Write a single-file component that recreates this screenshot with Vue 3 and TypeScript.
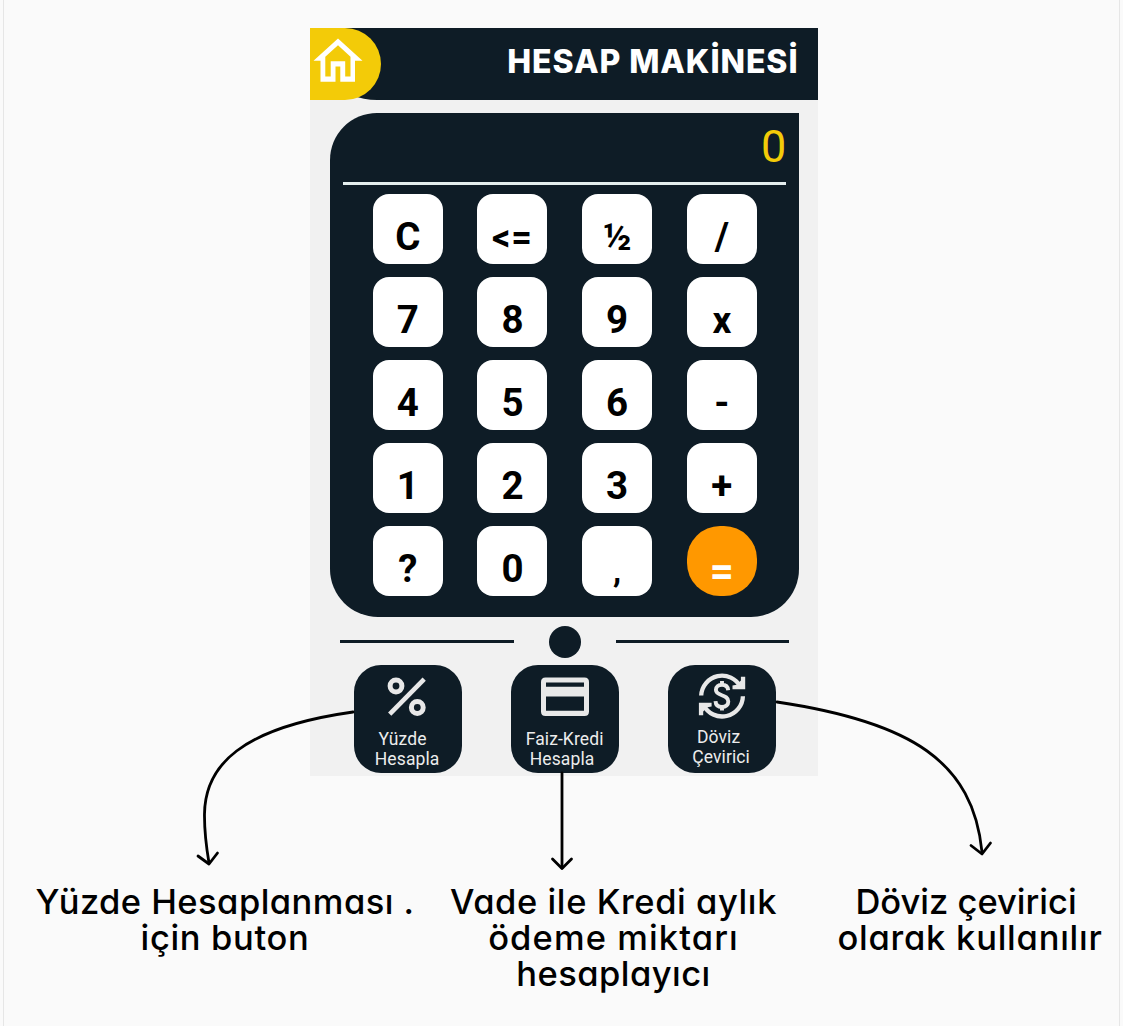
<script setup lang="ts">
interface Key {
  label: string
  kind?: string
}

const keys: Key[] = [
  { label: 'C' }, { label: '<=', kind: 'back' }, { label: '½', kind: 'half' }, { label: '/', kind: 'slash' },
  { label: '7' }, { label: '8' }, { label: '9' }, { label: 'x', kind: 'times' },
  { label: '4' }, { label: '5' }, { label: '6' }, { label: '-' },
  { label: '1' }, { label: '2' }, { label: '3' }, { label: '+' },
  { label: '?' }, { label: '0' }, { label: ',', kind: 'comma' }, { label: '=', kind: 'equals' },
]
</script>

<template>
  <main class="page">
    <section class="phone">
      <header class="header">
        <div class="home">
          <svg viewBox="0 0 50 46" width="50" height="46">
            <path fill="#fff" fill-rule="evenodd" d="M25 1.500 49.500 23.700H42V44.700H27.300V29.500H22.500V44.700H7.500V23.700H.500ZM25 8.200 12.300 19.700V39.500H17.700V24.300H32.200V39.500H37.500V19.700Z" />
          </svg>
        </div>
        <h1 class="title">HESAP MAKİNESİ</h1>
      </header>

      <div class="panel">
        <div class="display">0</div>
        <div class="keys">
          <button v-for="key in keys" :key="key.label" class="key" :class="key.kind">
            <span>{{ key.label }}</span>
          </button>
        </div>
      </div>

      <div class="divider">
        <i class="rule"></i><i class="dot"></i><i class="rule"></i>
      </div>

      <nav class="tools">
        <div class="tool percent">
          <svg class="icon" viewBox="0 0 48 48" width="48" height="48" fill="none" stroke="#e8e8e8">
            <circle cx="13" cy="13" r="5.900" stroke-width="5" />
            <circle cx="34.300" cy="34.500" r="5.900" stroke-width="5" />
            <path d="M6.700 41.200 41.200 6.200" stroke-width="4.600" />
          </svg>
          <span class="label"><b>Yüzde</b><b>Hesapla</b></span>
        </div>
        <div class="tool credit">
          <svg class="icon" viewBox="0 0 48 48" width="48" height="48">
            <path fill="#e8e8e8" fill-rule="evenodd" d="M4.500 4.500H43.500Q48 4.500 48 9V38.500Q48 43 43.500 43H4.500Q0 43 0 38.500V9Q0 4.500 4.500 4.500ZM5 9.500V13.700H43V9.500ZM5 23.500V37.700H43V23.500Z" />
          </svg>
          <span class="label"><b>Faiz-Kredi</b><b>Hesapla</b></span>
        </div>
        <div class="tool currency">
          <svg class="icon" viewBox="0 0 48 48" width="48" height="48" fill="none" stroke="#e8e8e8" stroke-width="4.300">
            <path d="M3.200 22.500A20.800 20.800 0 0 1 42.500 14" />
            <path d="M44.900 23.200A20.800 20.800 0 0 1 5.500 32" />
            <path d="M47.200 3.700V16.300H34.500V12.500L38.500 11.700 42.900 7.500V3.700Z" fill="#e8e8e8" stroke="none" />
            <path d="M.900 42.300V29.700H13.600V33.500L9.600 34.300 5.200 38.500V42.300Z" fill="#e8e8e8" stroke="none" />
            <path d="M30.200 17.200C29.800 13.500 27.500 11.800 24 11.800C20.200 11.800 17.900 13.800 17.900 16.800C17.900 23.700 30.300 20.800 30.300 28.600C30.300 32 27.800 34 24 34C20.200 34 17.700 32 17.500 28.200M24 8V12M24 33.500V37.500" stroke-width="3.900" />
          </svg>
          <span class="label"><b>Döviz</b><b>Çevirici</b></span>
        </div>
      </nav>
    </section>

    <section class="captions">
      <p class="first"><span class="l1">Yüzde Hesaplanması .</span><span class="l2">için buton</span></p>
      <p class="second"><span class="l3">Vade ile Kredi aylık</span><span class="l4">ödeme miktarı</span><span class="l5">hesaplayıcı</span></p>
      <p class="third"><span class="l6">Döviz çevirici</span><span class="l7">olarak kullanılır</span></p>
    </section>

    <svg class="arrows" viewBox="0 0 1123 1026" width="1123" height="1026">
      <path d="M353 712C240 728 205 766 204.500 814C204.300 832 206 845 209 863" />
      <path d="M198 856 209 864 217.500 853" />
      <path d="M562 773V868" />
      <path d="M552.500 859 562 868.500 571.500 859" />
      <path d="M777 702C912 722 973 762 982 852" />
      <path d="M971 845.500 982 854 990.500 843" />
    </svg>
  </main>
</template>

<style>
body {
  margin: 0;
  background: #fafafa;
}
</style>

<style scoped>
.page {
  position: relative;
  box-sizing: border-box;
  width: 1123px;
  height: 1026px;
  padding-top: 28px;
  overflow: hidden;
  background: linear-gradient(90deg, #fafafa 3px, #e6e6e6 3px, #e6e6e6 4px, #fafafa 4px, #fafafa 1119px, #e6e6e6 1119px, #e6e6e6 1120px, #fafafa 1120px);
}
.phone {
  box-sizing: border-box;
  width: 508px;
  height: 748px;
  margin-left: 310px;
  background: #f1f1f1;
}
.header {
  display: flex;
  justify-content: space-between;
  height: 72.400px;
  background: #0e1c26;
  border-bottom-left-radius: 67px;
}
.home {
  display: flex;
  width: 71px;
  height: 72.400px;
  background: #f3cb08;
  border-radius: 0 36px 36px 0;
}
.home svg {
  margin: 9px 0 0 2.500px;
}
.title {
  margin: 0 19.500px 0 0;
  color: #fff;
  font: 800 32px/67px Inter, sans-serif;
  letter-spacing: 0.930px;
  white-space: nowrap;
}
.panel {
  box-sizing: border-box;
  width: 469px;
  height: 503.500px;
  margin: 13.100px 0 0 20.400px;
  padding: 0 13px;
  background: #0e1c26;
  border-radius: 47px 0 48px 48px;
}
.display {
  box-sizing: border-box;
  height: 72px;
  border-bottom: 3px solid #e4eeee;
  color: #f3cb08;
  font: 400 45px/67px Roboto, sans-serif;
  text-align: right;
}
.keys {
  display: grid;
  grid-template-columns: repeat(4, 70px);
  grid-auto-rows: 70px;
  gap: 12.800px 34.700px;
  padding: 9px 0 0 29.400px;
}
.key {
  display: flex;
  align-items: center;
  justify-content: center;
  padding: 16px 0 0;
  border: 0;
  border-radius: 16px;
  background: #fff;
  color: #000;
  font: 700 38.500px/46px Roboto, sans-serif;
}
.back {
  padding-top: 18px;
  font-size: 36px;
  letter-spacing: 1px;
}
.half {
  font-size: 37.500px;
}
.times {
  padding-top: 18px;
  font-size: 37px;
}
.comma {
  padding-top: 20px;
  font-size: 33px;
}
.equals {
  padding-top: 22px;
  border-radius: 33px;
  background: #ff9800;
  color: #fff;
  font-size: 42px;
}
.divider {
  display: flex;
  align-items: center;
  justify-content: space-between;
  height: 32px;
  margin: 9.500px 29px 0 30px;
}
.rule {
  width: 173.500px;
  height: 2.500px;
  margin-bottom: 2px;
  background: #0e1c26;
}
.dot {
  width: 32px;
  height: 32px;
  border-radius: 50%;
  background: #0e1c26;
}
.tools {
  display: flex;
  gap: 49px;
  margin: 6.500px 0 0 43.600px;
}
.tool {
  display: flex;
  flex-direction: column;
  align-items: center;
  width: 108px;
  height: 108px;
  border-radius: 27px;
  background: #0e1c26;
}
.icon {
  margin-top: 8px;
}
.label {
  display: flex;
  flex-direction: column;
  align-items: center;
  margin-top: 8px;
  color: #ececec;
  font: 400 17.500px/20.500px Roboto, sans-serif;
}
.label b {
  font-weight: 400;
  letter-spacing: 0.100px;
}
.percent b:first-child {
  margin-right: 9px;
}
.percent .label {
  margin-right: 1px;
}
.percent .icon {
  margin-right: 0.500px;
}
.credit b:last-child {
  margin-right: 5px;
}
.currency b:first-child {
  margin-right: 5px;
}
.currency .label {
  margin-top: 6px;
  margin-right: 1px;
}
.captions {
  display: flex;
  margin-top: 108px;
  color: #000;
  font: 500 34.500px/36px Inter, sans-serif;
  font-feature-settings: 'cv11';
}
.captions p {
  display: flex;
  flex-direction: column;
  align-items: center;
  margin: 0;
  white-space: nowrap;
}
.captions .first {
  width: 450px;
}
.captions .second {
  width: 327px;
}
.captions .third {
  width: 264px;
  margin-left: 61px;
}
.l1 {
  letter-spacing: 0.450px;
}
.l2 {
  letter-spacing: 0.650px;
}
.l3 {
  letter-spacing: 0.580px;
}
.l4 {
  letter-spacing: 1.100px;
}
.l5 {
  letter-spacing: 0.450px;
}
.l6 {
  margin-right: 8px;
}
.l7 {
  letter-spacing: 0.760px;
}
.arrows {
  position: absolute;
  inset: 0;
  fill: none;
  stroke: #000;
  stroke-width: 2.800;
  stroke-linecap: round;
  stroke-linejoin: round;
}
</style>
